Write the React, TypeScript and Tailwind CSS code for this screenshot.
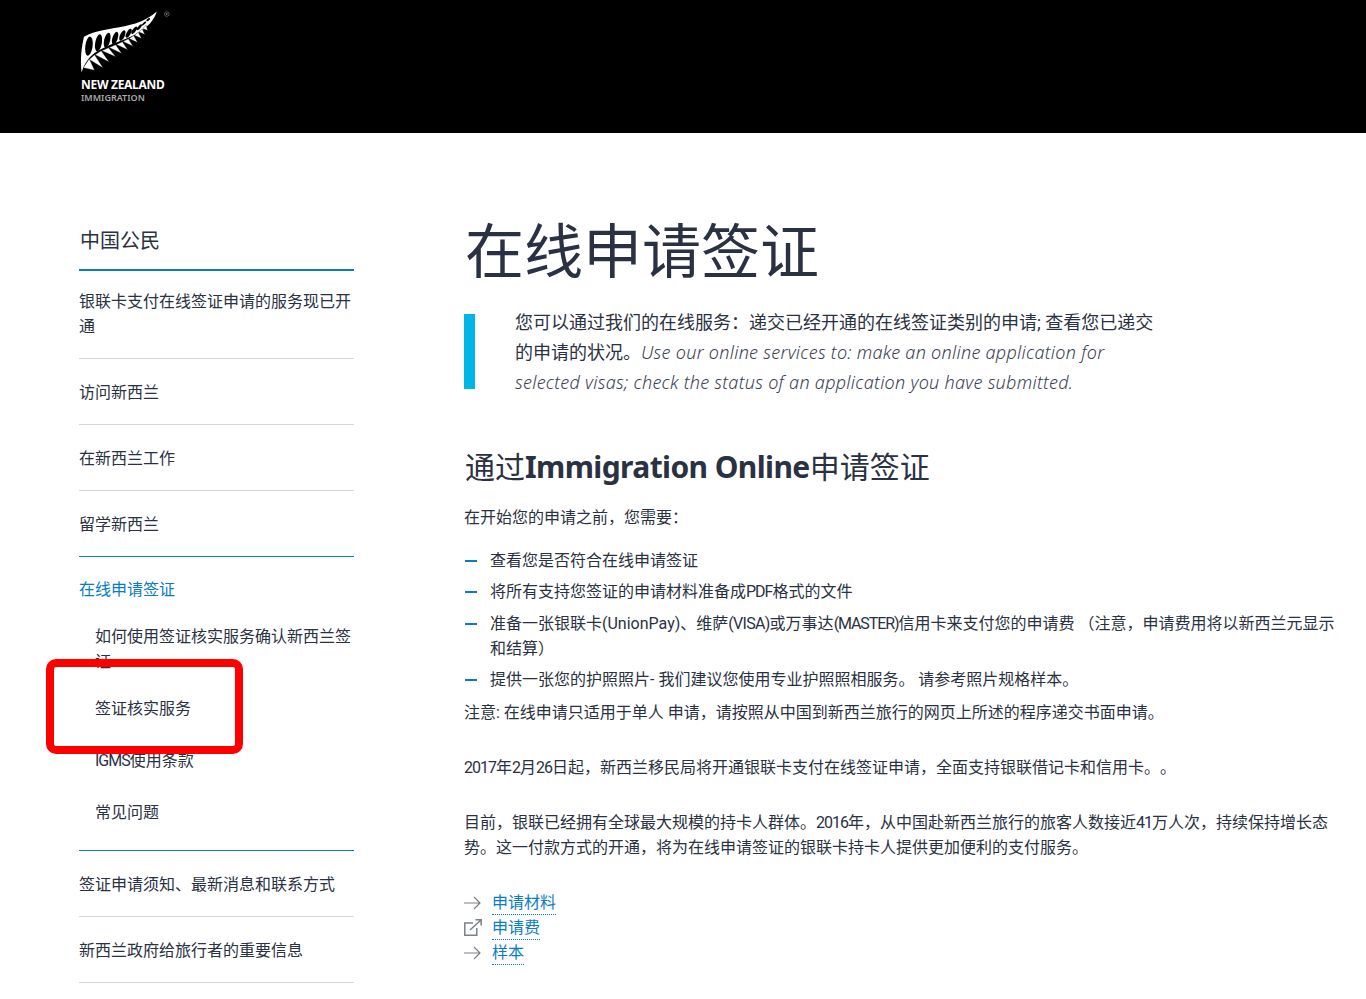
import { FC, ReactNode } from 'react'

const leaves = [
  [70, 205, 34, 8, 88, 178], [88, 180, 42, 26, 104, 166], [106, 166, 42, 22, 124, 154],
  [126, 154, 42, 18, 146, 145], [148, 144, 38, 18, 168, 136], [170, 135, 34, 16, 188, 127],
  [190, 126, 30, 14, 206, 118], [208, 117, 26, 12, 222, 108], [224, 107, 22, 10, 236, 98],
  [238, 97, 18, 8, 248, 88], [250, 87, 14, 6, 260, 76],
]

const loops = [
  [87, 140, 11, 29, 8], [116, 130, 10, 26, 10], [142, 122, 9, 23, 14], [166, 116, 8, 20, 18],
  [188, 108, 7, 17, 24], [207, 101, 6, 15, 30], [224, 92, 5, 13, 36], [239, 83, 4, 11, 42],
  [253, 72, 3, 9, 48], [266, 60, 3, 7, 52],
]

const Fern = () => (
  <svg viewBox="60 25 290 205" className="block h-[68px] w-[96px]" aria-hidden="true">
    <path d="M72 112C110 90 170 88 215 75C250 65 275 50 292 35C285 60 265 82 235 100C190 125 140 135 105 160C85 175 72 195 65 220C60 180 65 140 72 112Z" fill="#fff" />
    {loops.map(([cx, cy, rx, ry, r]) => (
      <ellipse key={cx} cx={cx} cy={cy} rx={rx} ry={ry} fill="#000" transform={`rotate(${r} ${cx} ${cy})`} />
    ))}
    {leaves.map(([x, y, dx, dy, ex, ey]) => (
      <path key={x} d={`M${x} ${y}L${x + dx} ${y + dy}L${ex} ${ey}Z`} fill="#fff" stroke="#000" strokeWidth="1" />
    ))}
    <circle cx="322" cy="43" r="7" fill="none" stroke="#aaa" strokeWidth="1.5" />
    <circle cx="322" cy="43" r="2.500" fill="#aaa" />
  </svg>
)

const Arrow = () => (
  <svg viewBox="0 0 18 14" className="h-[14px] w-[18px] shrink-0" fill="none" stroke="#7b8087" strokeWidth="1.2" aria-hidden="true">
    <path d="M0 7h16M10 1l6 6-6 6" />
  </svg>
)

const External = () => (
  <svg viewBox="0 0 18 17" className="h-[17px] w-[18px] shrink-0" fill="none" stroke="#7b8087" strokeWidth="1.500" aria-hidden="true">
    <path d="M9 4H.8v12.200h12V9M6 11 17 1M11.500.8h5.700v5.700" />
  </svg>
)

const N: FC<{ children: ReactNode }> = ({ children }) => <span className="tracking-[-1px]">{children}</span>

const Item: FC<{ children: ReactNode, border?: string, pad?: string }> = ({ children, border = 'border-[#d5d7da]', pad = 'pt-[21px] pb-[19px]' }) => (
  <li className={`border-b ${border} ${pad}`}>{children}</li>
)

const Dash: FC<{ children: ReactNode, gap?: string }> = ({ children, gap = 'mb-[6px]' }) => (
  <li className={`relative pl-[26px] ${gap}`}>
    <span className="absolute left-[1px] top-[12px] h-[2px] w-[12px] bg-[#0a7cc4]" />
    {children}
  </li>
)

const LinkRow: FC<{ icon: ReactNode, label: string }> = ({ icon, label }) => (
  <div className="flex h-[25px] items-center gap-[10px]">
    <span className="flex w-[18px]">{icon}</span>
    <a className="border-b border-dotted border-[#0a7cc4] leading-[23px] text-[#0a7cc4]">{label}</a>
  </div>
)

export default function App() {
  return (
    <div className="relative h-[999px] overflow-hidden bg-white text-[16px] leading-[25px] text-[#2a3142] [text-spacing-trim:space-all] [font-family:Roboto,'Noto_Sans_CJK_SC',sans-serif]">
      <header className="h-[133px] bg-black pl-[80px] pt-[8px] text-white">
        <Fern />
        <div className="ml-[1px] mt-[2px] text-[12px] font-bold leading-[14px] tracking-[-0.3px] [font-family:'Noto_Sans',sans-serif]">NEW ZEALAND</div>
        <div className="ml-[1px] text-[9px] font-semibold leading-[11px] text-[#aaaaaa] [font-family:'Noto_Sans',sans-serif]">IMMIGRATION</div>
      </header>

      <div className="flex pl-[79px]">
        <aside className="w-[275px] shrink-0 pt-[93px]">
          <div className="border-b-2 border-[#0a7cc4] pb-[13px] pl-[1px] text-[20px] leading-[30px]">中国公民</div>
          <ul>
            <Item pad="pt-[18px] pb-[19px]">银联卡支付在线签证申请的服务现已开通</Item>
            <Item>访问新西兰</Item>
            <Item>在新西兰工作</Item>
            <Item border="border-[#0a7cc4]">留学新西兰</Item>
            <li className="border-b border-[#0a7cc4] pb-[25px] pt-[20px]">
              <div className="text-[#0a7cc4]">在线申请签证</div>
              <ul className="pl-[16px]">
                <li className="mt-[22px]">如何使用签证核实服务确认新西兰签证</li>
                <li className="mt-[22px]">签证核实服务</li>
                <li className="mt-[27px]"><N>IGMS</N>使用条款</li>
                <li className="mt-[27px]">常见问题</li>
              </ul>
            </li>
            <Item>签证申请须知、最新消息和联系方式</Item>
            <Item>新西兰政府给旅行者的重要信息</Item>
          </ul>
        </aside>

        <main className="ml-[110px] w-[876px] pt-[80px]">
          <h1 className="pl-[1px] text-[59px] font-normal leading-[80px]">在线申请签证</h1>
          <div className="mt-[21px] flex h-[75px] w-[700px] items-center">
            <span className="h-[75px] w-[11px] shrink-0 bg-[#00b5e8]" />
            <p className="ml-[40px] w-[640px] pt-[2px] text-[18px] leading-[30px]">
              您可以通过我们的在线服务：递交已经开通的在线签证类别的申请; 查看您已递交的申请的状况。<em className="font-light leading-[20px] tracking-[0.28px] text-[#3a4152] [font-family:'Noto_Sans','Noto_Sans_CJK_SC',sans-serif]">Use our online services to: make an online application for selected visas; check the status of an application you have submitted.</em>
            </p>
          </div>
          <h2 className="ml-[1px] mt-[59px] text-[30px] font-normal leading-[40px]">通过<b className="font-bold leading-[30px] tracking-[-0.6px] [font-family:'Noto_Sans',sans-serif]">Immigration Online</b>申请签证</h2>
          <p className="mt-[17px]">在开始您的申请之前，您需要：</p>
          <ul className="mt-[18px]">
            <Dash>查看您是否符合在线申请签证</Dash>
            <Dash gap="mb-[7px]">将所有支持您签证的申请材料准备成<N>PDF</N>格式的文件</Dash>
            <Dash>准备一张银联卡(UnionPay)、维萨<span className="tracking-[-0.7px]">(VISA)</span>或万事达<span className="tracking-[-1.1px]">(MASTER)</span>信用卡来支付您的申请费 （注意，申请费用将以新西兰元显示和结算）</Dash>
            <Dash>提供一张您的护照照片- 我们建议您使用专业护照照相服务。 请参考照片规格样本。</Dash>
          </ul>
          <p className="mt-[8px]">注意: 在线申请只适用于单人 申请，请按照从中国到新西兰旅行的网页上所述的程序递交书面申请。</p>
          <p className="mt-[30px]"><N>2017</N>年<N>2</N>月<N>26</N>日起，新西兰移民局将开通银联卡支付在线签证申请，全面支持银联借记卡和信用卡。。</p>
          <p className="mt-[30px]">目前，银联已经拥有全球最大规模的持卡人群体。<N>2016</N>年，从中国赴新西兰旅行的旅客人数接近<N>41</N>万人次，持续保持增长态势。这一付款方式的开通，将为在线申请签证的银联卡持卡人提供更加便利的支付服务。</p>
          <div className="mt-[30px]">
            <LinkRow icon={<Arrow />} label="申请材料" />
            <LinkRow icon={<External />} label="申请费" />
            <LinkRow icon={<Arrow />} label="样本" />
          </div>
        </main>
      </div>

      <div className="absolute left-[46px] top-[659px] h-[95px] w-[197px] rounded-[10px] border-[8px] border-[#ff0000]" />
    </div>
  )
}
